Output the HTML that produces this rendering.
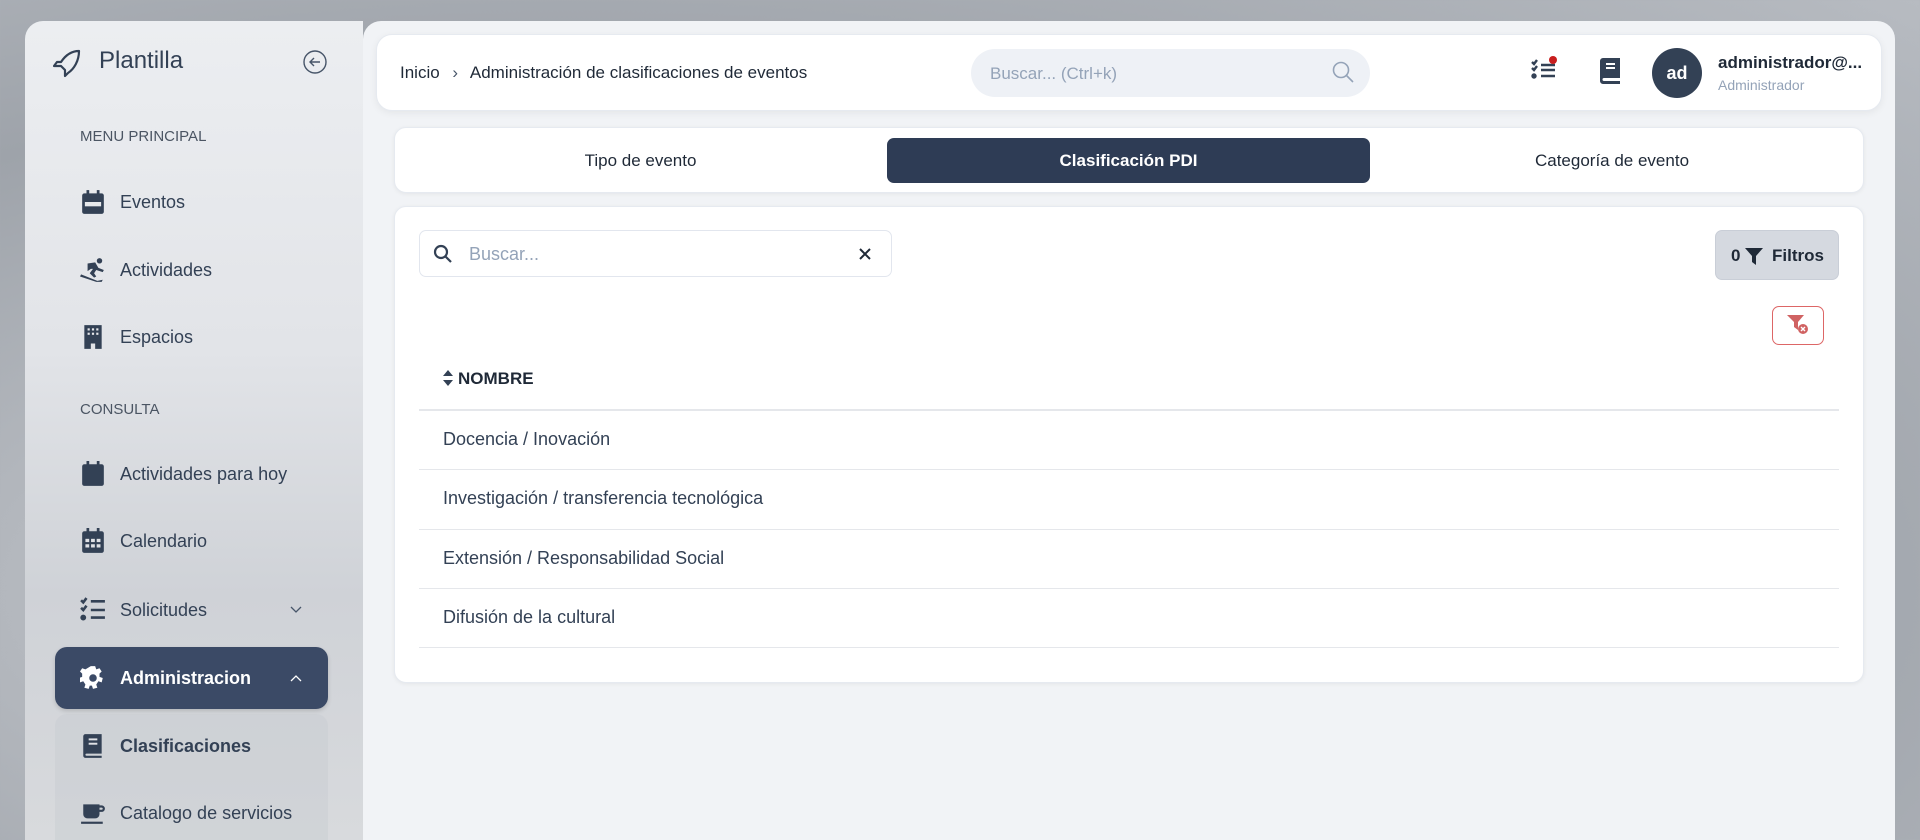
<!DOCTYPE html>
<html style="overflow:hidden;width:1920px;height:840px"><head><meta charset="utf-8"><style>
*{margin:0;padding:0;box-sizing:border-box}
body{width:1920px;height:840px;overflow:hidden;font-family:"Liberation Sans",sans-serif;color:#334155;background:radial-gradient(ellipse at 30% 70%,#c9ccd1,#9ea3aa 60%,#b7bbc1);position:relative}
.a{position:absolute}
.side{left:25px;top:21px;width:338px;height:819px;border-radius:18px 0 0 0;background:linear-gradient(180deg,#eceef1 0%,#e2e4e8 40%,#cfd2d7 70%,#d8dadd 100%)}
.main{left:363px;top:21px;width:1532px;height:819px;border-radius:18px 18px 0 0;background:#f1f3f6}
.card{background:#fff;border-radius:12px;box-shadow:0 1px 4px rgba(0,0,0,.06);border:1px solid #e6eaf0}
.lbl{font-size:15px;color:#4b5563;left:80px}
.it{left:80px;font-size:18px;color:#334155;display:flex;align-items:center;gap:0}
.it svg{width:26px;height:26px;margin-right:14px}
.row{left:419px;width:1420px;height:1px;background:#e5e7eb}
.rt{left:443px;font-size:18px;color:#334155}
</style></head><body>
<div class="a side"></div>
<div class="a main"></div>
<svg class="a" style="left:53px;top:48px" width="28" height="30" viewBox="0 0 28 30" fill="none" stroke="#334155" stroke-width="2.2" stroke-linejoin="round"><path d="M26 3 C18 3 12 8 8 14 L4 14 L1 18 L8 18 L12 22 L12 28 L15 25 C21 21 26 13 26 3Z"/></svg>
<div class="a" style="left:99px;top:47px;font-size:24px;color:#334155">Plantilla</div>
<svg class="a" style="left:303px;top:50px" width="24" height="24" viewBox="0 0 24 24" fill="none" stroke="#475569" stroke-width="1.4"><circle cx="12" cy="12" r="11"/><path d="M17 12H7M11 8l-4 4 4 4"/></svg>
<div class="a lbl" style="top:128px">MENU PRINCIPAL</div>
<div class="a it" style="top:189px"><svg viewBox="0 0 24 24" fill="#334155"><rect x="6" y="1" width="2.5" height="4"/><rect x="15.5" y="1" width="2.5" height="4"/><rect x="2" y="4" width="20" height="19" rx="2"/><rect x="4.5" y="12" width="15" height="4" fill="#e6e8eb"/></svg>Eventos</div>
<div class="a it" style="top:257px"><svg viewBox="0 0 24 24" fill="#334155"><circle cx="18" cy="3.5" r="2.5"/><path d="M7 6l7-1 3 5 5 2-1 2-6-2-2 3 2 3-2 1-4-4 3-4-2 0-3 2z"/><path d="M1 16l15 6 5-1-1 2-5 0L0 18z"/></svg>Actividades</div>
<div class="a it" style="top:324px"><svg viewBox="0 0 24 24" fill="#334155"><path d="M4 1h16v22h-6v-5h-4v5H4z"/><g fill="#e6e8eb"><rect x="7" y="4" width="2" height="2"/><rect x="11" y="4" width="2" height="2"/><rect x="15" y="4" width="2" height="2"/><rect x="7" y="8" width="2" height="2"/><rect x="11" y="8" width="2" height="2"/><rect x="15" y="8" width="2" height="2"/></g></svg>Espacios</div>
<div class="a lbl" style="top:401px">CONSULTA</div>
<div class="a it" style="top:461px"><svg viewBox="0 0 24 24" fill="#334155"><rect x="6" y="0" width="2.5" height="4"/><rect x="15.5" y="0" width="2.5" height="4"/><rect x="2" y="3" width="20" height="20" rx="2"/></svg>Actividades para hoy</div>
<div class="a it" style="top:528px"><svg viewBox="0 0 24 24" fill="#334155"><rect x="6" y="0" width="2.5" height="4"/><rect x="15.5" y="0" width="2.5" height="4"/><rect x="2" y="3" width="20" height="20" rx="2"/><g fill="#dfe1e5"><rect x="5" y="10" width="3.5" height="3"/><rect x="10.2" y="10" width="3.5" height="3"/><rect x="15.4" y="10" width="3.5" height="3"/><rect x="5" y="15" width="3.5" height="3"/><rect x="10.2" y="15" width="3.5" height="3"/><rect x="15.4" y="15" width="3.5" height="3"/></g></svg>Calendario</div>
<div class="a it" style="top:597px"><svg viewBox="0 0 24 24" fill="none" stroke="#334155" stroke-width="2.4"><path d="M1 3l2 2 3-4M1 10l2 2 3-4"/><circle cx="3" cy="19" r="1.5" fill="#334155"/><path d="M10 4h13M10 12h13M10 19h13"/></svg>Solicitudes</div>
<svg class="a" style="left:290px;top:606px" width="12" height="8" viewBox="0 0 12 8" fill="none" stroke="#475569" stroke-width="1.3"><path d="M1 1l5 5 5-5"/></svg>
<div class="a" style="left:55px;top:647px;width:273px;height:62px;border-radius:12px;background:#3b4a66;box-shadow:0 2px 4px rgba(0,0,0,.15)"></div>
<div class="a it" style="top:665px;color:#fff;font-weight:bold"><svg viewBox="0 0 24 24" fill="#fff"><path d="M10 1h4l1 3 3-1 2 3-2 2 0 3 3 1-1 4-3-1-2 3 1 3-4 1-1-3h-2l-1 3-4-1 1-3-2-3-3 1-1-4 3-1 0-3-2-2 2-3 3 1z"/><circle cx="12" cy="12" r="3.5" fill="#3b4a66"/></svg>Administracion</div>
<svg class="a" style="left:290px;top:674px" width="12" height="8" viewBox="0 0 12 8" fill="none" stroke="#fff" stroke-width="1.3"><path d="M1 7l5-5 5 5"/></svg>
<div class="a" style="left:55px;top:714px;width:273px;height:140px;border-radius:12px;background:rgba(200,203,208,.45)"></div>
<div class="a it" style="top:733px;font-weight:bold"><svg viewBox="0 0 24 24" fill="#334155"><path d="M3 3a2 2 0 012-2h15v18H6a1 1 0 000 2h14v2H5a2 2 0 01-2-2z"/><rect x="8" y="5" width="8" height="1.8" fill="#dfe1e5"/><rect x="8" y="9" width="8" height="1.8" fill="#dfe1e5"/></svg>Clasificaciones</div>
<div class="a it" style="top:800px"><svg viewBox="0 0 24 24" fill="#334155"><path d="M3 4h15v9a4 4 0 01-4 4H7a4 4 0 01-4-4z"/><path d="M18 5h2a3 3 0 010 6h-2v-2h2a1 1 0 000-2h-2z"/><rect x="1" y="20" width="20" height="2"/></svg>Catalogo de servicios</div>
<div class="a card" style="left:376px;top:34px;width:1506px;height:77px;border-radius:16px;box-shadow:0 2px 8px rgba(0,0,0,.06)"></div>
<div class="a" style="left:400px;top:63px;font-size:17px;color:#1f2937">Inicio <span style="margin:0 8px;color:#475569">›</span> Administración de clasificaciones de eventos</div>
<div class="a" style="left:971px;top:49px;width:399px;height:48px;border-radius:24px;background:#eef1f6"></div>
<div class="a" style="left:990px;top:64px;font-size:17px;color:#94a3b8">Buscar... (Ctrl+k)</div>
<svg class="a" style="left:1332px;top:61px" width="22" height="22" viewBox="0 0 22 22" fill="none" stroke="#94a3b8" stroke-width="1.6"><circle cx="9" cy="9" r="7.5"/><path d="M14.5 14.5L21 21"/></svg>
<svg class="a" style="left:1531px;top:56px" width="28" height="28" viewBox="0 0 28 28" fill="none" stroke="#334155" stroke-width="2.4"><path d="M1 6l2 2 3-4M1 12l2 2 3-4"/><circle cx="3" cy="20" r="1.5" fill="#334155"/><path d="M10 9h14M10 14h14M10 20h14"/><circle cx="22" cy="4" r="4" fill="#c81e1e" stroke="none"/></svg>
<svg class="a" style="left:1598px;top:58px" width="24" height="26" viewBox="0 0 24 26" fill="#334155"><path d="M2 3a3 3 0 013-3h17v20H6a1.5 1.5 0 000 3h16v3H5a3 3 0 01-3-3z"/><rect x="8" y="5" width="9" height="2" fill="#fff"/><rect x="8" y="9" width="9" height="2" fill="#fff"/></svg>
<div class="a" style="left:1652px;top:48px;width:50px;height:50px;border-radius:50%;background:#334155;color:#fff;font-weight:bold;font-size:18px;text-align:center;line-height:50px">ad</div>
<div class="a" style="left:1718px;top:53px;font-size:17px;font-weight:bold;color:#1f2937">administrador@...</div>
<div class="a" style="left:1718px;top:77px;font-size:14px;color:#94a3b8">Administrador</div>
<div class="a card" style="left:394px;top:127px;width:1470px;height:66px"></div>
<div class="a" style="left:887px;top:138px;width:483px;height:45px;border-radius:7px;background:#2e3c55"></div>
<div class="a" style="left:394px;top:151px;width:493px;text-align:center;font-size:17px;color:#1f2937">Tipo de evento</div>
<div class="a" style="left:887px;top:151px;width:483px;text-align:center;font-size:17px;color:#fff;font-weight:bold">Clasificación PDI</div>
<div class="a" style="left:1370px;top:151px;width:484px;text-align:center;font-size:17px;color:#1f2937">Categoría de evento</div>
<div class="a card" style="left:394px;top:206px;width:1470px;height:477px"></div>
<div class="a" style="left:419px;top:230px;width:473px;height:47px;border:1px solid #e2e6ee;border-radius:7px;background:#fff"></div>
<svg class="a" style="left:433px;top:244px" width="20" height="20" viewBox="0 0 20 20" fill="none" stroke="#334155" stroke-width="2.2"><circle cx="8" cy="8" r="6"/><path d="M12.5 12.5L18 18"/></svg>
<div class="a" style="left:469px;top:244px;font-size:18px;color:#94a3b8">Buscar...</div>
<svg class="a" style="left:859px;top:248px" width="12" height="12" viewBox="0 0 12 12" stroke="#1f2937" stroke-width="2"><path d="M1 1l10 10M11 1L1 11"/></svg>
<div class="a" style="left:1715px;top:230px;width:124px;height:50px;border-radius:7px;background:#d5d9e0;border:1px solid #c9ced7"></div>
<div class="a" style="left:1731px;top:246px;font-size:17px;color:#1f2937;font-weight:bold">0</div>
<svg class="a" style="left:1745px;top:248px" width="18" height="17" viewBox="0 0 18 17" fill="#1f2937"><path d="M0 0h18l-7 8v9l-4-3V8z"/></svg>
<div class="a" style="left:1772px;top:246px;font-size:17px;color:#1f2937;font-weight:bold">Filtros</div>
<div class="a" style="left:1772px;top:306px;width:52px;height:39px;border:1.5px solid #d66;border-radius:7px;background:#fff"></div>
<svg class="a" style="left:1787px;top:315px" width="22" height="20" viewBox="0 0 22 20" fill="#d06262"><path d="M0 0h17l-6 7v8l-4-3V7z"/><circle cx="16" cy="14" r="5" fill="#d06262"/><path d="M14 12l4 4M18 12l-4 4" stroke="#fff" stroke-width="1.4"/></svg>
<svg class="a" style="left:443px;top:370px" width="10" height="16" viewBox="0 0 10 16" fill="#334155"><path d="M5 0l5 6H0zM5 16l5-6H0z"/></svg>
<div class="a" style="left:458px;top:369px;font-size:17px;font-weight:bold;color:#1f2937">NOMBRE</div>
<div class="a row" style="top:409px;height:2px"></div>
<div class="a rt" style="top:429px">Docencia / Inovación</div>
<div class="a row" style="top:469px"></div>
<div class="a rt" style="top:488px">Investigación / transferencia tecnológica</div>
<div class="a row" style="top:529px"></div>
<div class="a rt" style="top:548px">Extensión / Responsabilidad Social</div>
<div class="a row" style="top:588px"></div>
<div class="a rt" style="top:607px">Difusión de la cultural</div>
<div class="a row" style="top:647px"></div>
</body></html>
